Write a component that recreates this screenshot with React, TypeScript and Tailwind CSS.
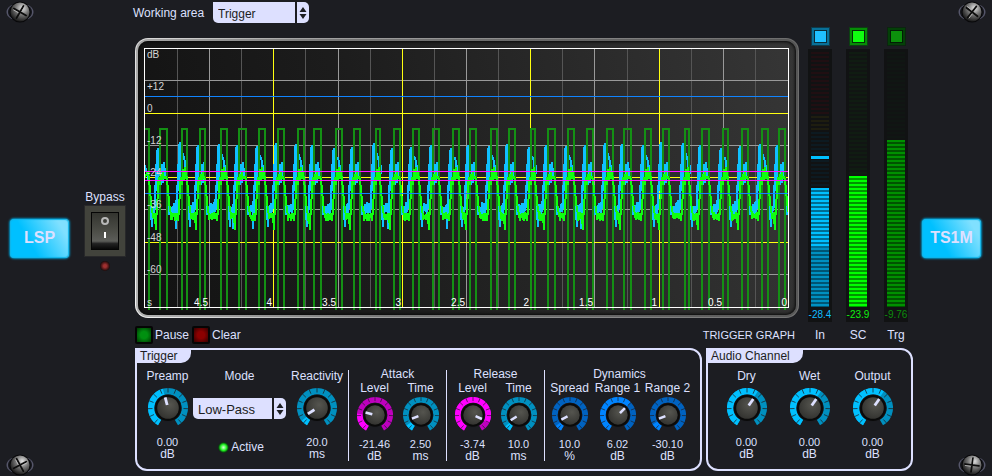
import React from "react";

const PULSES: [number, number][] = [
  [140, 149], [160, 167], [182, 187], [200, 205], [221, 227], [239, 246], [259, 265],
  [278, 284], [298, 304], [314, 321], [336, 342], [354, 360], [376, 380], [394, 400],
  [413, 419], [433, 439], [453, 459], [470, 476], [491, 497], [509, 515], [531, 535],
  [548, 555], [568, 574], [587, 593], [607, 613], [624, 631], [645, 651], [663, 669],
  [685, 689], [702, 709], [723, 728], [742, 748], [762, 768], [779, 785], [801, 807],
];

const noise = (n: number) => {
  const v = Math.sin(n * 12.9898) * 43758.5453;
  return v - Math.floor(v);
};

const toPoints = (pts: [number, number][]) => pts.map((p) => p.join(",")).join(" ");

function buildGate() {
  const pts: [number, number][] = [];
  PULSES.forEach(([s, e]) => {
    pts.push([s, 320], [s, 129], [e, 129], [e, 320]);
  });
  return toPoints(pts);
}

function buildInput() {
  const pts: [number, number][] = [];
  PULSES.forEach(([s, e], i) => {
    const wide = i % 2 === 0;
    const peak = 143 + Math.round(noise(i) * 6);
    pts.push([s - 5, 206], [s - 4, 165], [s - 4, 190], [s - 3, peak + 3], [s - 2, peak], [s - 2, 188], [s - 1, peak + 4]);
    if (wide) {
      pts.push([s, peak + 8], [s + 2, 158], [s + 3, 162], [s + 4, 172], [s + 5, 166], [e, 182]);
    } else {
      pts.push([s, 168], [s + 1, 184], [s + 2, 165], [s + 3, 182], [s + 4, 163], [s + 5, 178], [e, 165], [e, 182]);
    }
    const next = PULSES[i + 1] ? PULSES[i + 1][0] : e + 18;
    pts.push([e + 1, 196], [e + 2, 214], [e + 3, wide ? 226 : 212]);
    for (let x = e + 4; x < next - 5; x++) {
      const rise = Math.min(6, x - e - 4);
      pts.push([x, 205 - rise + Math.round(noise(x) * 5)], [x, 210 + Math.round(noise(x + 7) * 4)]);
    }
    if (noise(i + 40) > 0.6) pts.push([next - 6, 228]);
  });
  return toPoints(pts);
}

function buildSidechain() {
  const pts: [number, number][] = [];
  PULSES.forEach(([s, e], i) => {
    const wide = i % 2 === 0;
    const top = wide ? 168 : 173;
    pts.push([s - 3, 214], [s - 2, 184], [s - 1, 178], [s, 184], [s + 1, top + 2], [s + 2, 180], [s + 3, top], [s + 4, 178], [e - 1, top + 4], [e, 180], [e + 1, 190], [e + 2, 202], [e + 3, 210]);
    const next = PULSES[i + 1] ? PULSES[i + 1][0] : e + 18;
    for (let x = e + 4; x < next - 4; x++) {
      pts.push([x, 213 + Math.round(noise(x + 3) * 3)], [x, 216 + Math.round(noise(x + 11) * 4)]);
    }
    pts.push([next - 4, wide ? 229 : 220], [next - 4, 214]);
  });
  return toPoints(pts);
}

const GATE = buildGate();
const INPUT = buildInput();
const SIDECHAIN = buildSidechain();

const MINOR_X = [177, 241, 305, 370, 434, 498, 562, 627, 691, 755];
const MAJOR_X = [209, 338, 466, 594, 723];
const MARK_X = [273, 402, 530, 659];
const LEVELS: [string, number][] = [["dB", 58], ["+12", 90], ["0", 112], ["-12", 144], ["-24", 176], ["-36", 208], ["-48", 241], ["-60", 273], ["s", 306]];
const TIMES: [string, number][] = [["4.5", 208], ["4", 272], ["3.5", 336], ["3", 401], ["2.5", 465], ["2", 529], ["1.5", 593], ["1", 657], ["0.5", 722], ["0", 787]];

function Graph() {
  return (
    <div className="rounded-[13px] bg-[linear-gradient(78deg,#f4f4f4_0%,#a5a5a5_30%,#6c6c6c_100%)] p-px">
      <div className="rounded-[12px] bg-[linear-gradient(80deg,#b4b4b4_0%,#777_35%,#555_100%)] p-[2px]">
        <div className="rounded-[10px] bg-[linear-gradient(76deg,#121212_0%,#1c1c1c_35%,#363636_100%)] pt-[7px] pr-[7px] pb-[5px] pl-[6px] shadow-[inset_0_0_3px_1px_#0a0a0a]">
          <svg viewBox="144 48 645 262" className="block h-auto w-full" fontFamily="'Liberation Sans', Arial, sans-serif" fontSize="10" role="img" aria-label="Trigger graph">
            <g shapeRendering="crispEdges">
              {MINOR_X.map((x) => <rect key={x} x={x} y="48" width="1" height="260" fill="#555" />)}
              {MAJOR_X.map((x) => <rect key={x} x={x} y="48" width="1" height="260" fill="#999" />)}
              {[80, 145, 209, 274].map((y) => <rect key={y} x="144" y={y} width="645" height="1" fill="#999" />)}
              {MARK_X.map((x) => <rect key={x} x={x} y="48" width="1" height="260" fill="#ffff10" />)}
              {[113, 177, 242].map((y) => <rect key={y} x="144" y={y} width="645" height="1" fill="#ffff10" />)}
              <g fill="none" strokeLinejoin="round">
                <polyline points={INPUT} stroke="#10c0ff" strokeWidth="2" />
                <polyline points={GATE} stroke="#149014" strokeWidth="2" />
                <polyline points={SIDECHAIN} stroke="#10ff10" strokeWidth="2" />
              </g>
              {[96, 193].map((y) => <rect key={y} x="144" y={y} width="645" height="1" fill="#1084ff" />)}
              {[171, 180].map((y) => <rect key={y} x="144" y={y} width="645" height="1" fill="#ff10ff" />)}
              <rect x="144.5" y="48.5" width="644" height="259" fill="none" stroke="#fff" />
            </g>
            <g fill="#d4d4d4">
              {LEVELS.map(([t, y]) => <text key={t} x="147" y={y}>{t}</text>)}
            </g>
            <g fill="#fff" textAnchor="end">
              {TIMES.map(([t, x]) => <text key={t} x={x} y="306">{t}</text>)}
            </g>
          </svg>
        </div>
      </div>
    </div>
  );
}

function Screw({ turn }: { turn: number }) {
  return (
    <svg width="28" height="23" viewBox="0 0 28 23" aria-hidden="true">
      <defs>
        <radialGradient id={`screw${turn}`} cx="0.62" cy="0.3" r="0.75">
          <stop offset="0" stopColor="#e4e4e4" />
          <stop offset="0.45" stopColor="#777" />
          <stop offset="1" stopColor="#111" />
        </radialGradient>
      </defs>
      <ellipse cx="14" cy="12" rx="13.5" ry="9" fill="#55566a" />
      <ellipse cx="14" cy="12" rx="12" ry="8.5" fill="#15161b" />
      <circle cx="14" cy="12" r="10.5" fill="#08080a" />
      <circle cx="14" cy="12" r="9.5" fill={`url(#screw${turn})`} />
      <g transform={`rotate(${turn} 14 12)`} strokeLinecap="round">
        <path d="M14 5V19M7 12H21" stroke="#0c0c0c" strokeWidth="1.800" />
        <path d="M15.400 5V10.500M7.500 13.400H12.500" stroke="#bbb" strokeWidth="0.800" />
      </g>
    </svg>
  );
}

const polar = (r: number, a: number): [number, number] => {
  const t = (a * Math.PI) / 180;
  return [20 + r * Math.sin(t), 20 - r * Math.cos(t)];
};

const arc = (r: number, a: number, b: number) => {
  const [x1, y1] = polar(r, a);
  const [x2, y2] = polar(r, b);
  return `M${x1} ${y1}A${r} ${r} 0 ${b - a > 180 ? 1 : 0} 1 ${x2} ${y2}`;
};

const TONES = {
  cyan: { on: "#00c0ff", off: "#0090c0" },
  blue: { on: "#0084ff", off: "#0062c0" },
  magenta: { on: "#ff00ff", off: "#bf00bf" },
};

type KnobProps = { label: string; value: string; unit: string; angle: number; lit: number; tone?: keyof typeof TONES; small?: boolean; width: string };

function Knob({ label, value, unit, angle, lit, tone = "cyan", small, width }: KnobProps) {
  const c = TONES[tone];
  const [px, py] = polar(4.500, angle);
  const [qx, qy] = polar(9.500, angle);
  const ticks = Array.from({ length: 13 }, (_, i) => -138 + i * 23);
  return (
    <div className={`flex shrink-0 flex-col items-center text-[12px] leading-[12px] whitespace-nowrap ${width}`}>
      <span>{label}</span>
      <svg viewBox="0 0 40 40" className={small ? "mt-[3px] mb-[5px] size-9" : "mt-[6px] mb-2 size-10"} role="slider" aria-label={label} aria-valuetext={`${value} ${unit}`} aria-valuenow={angle}>
        <defs>
          <radialGradient id={`cap-${tone}`} cx="0.6" cy="0.35" r="0.7">
            <stop offset="0" stopColor="#55554f" />
            <stop offset="1" stopColor="#32322f" />
          </radialGradient>
        </defs>
        <path d={arc(16.800, -150, 150)} fill="none" stroke={c.off} strokeWidth="6.400" />
        <path d={arc(16.800, -150, lit)} fill="none" stroke={c.on} strokeWidth="6.400" />
        {ticks.map((a) => {
          const [x1, y1] = polar(15.500, a);
          const [x2, y2] = polar(20.500, a);
          return <line key={a} x1={x1} y1={y1} x2={x2} y2={y2} stroke="#1c1d22" strokeOpacity="0.750" strokeWidth="1" />;
        })}
        <circle cx="20" cy="20" r="13.600" fill="#1c1d22" />
        <circle cx="20" cy="20" r="13" fill="#0a0a0a" />
        <circle cx="20" cy="20" r="10.800" fill={`url(#cap-${tone})`} />
        <line x1={px} y1={py} x2={qx} y2={qy} stroke="#dde0ff" strokeWidth="2.800" strokeLinecap="square" />
      </svg>
      <span className="text-[11px]">{value}</span>
      <span>{unit}</span>
    </div>
  );
}

function KnobGroup({ title, className, children }: { title: string; className: string; children: React.ReactNode }) {
  return (
    <div className={`flex h-[91px] flex-col items-center border-l border-[#dde0ff] ${className}`}>
      <div className="-mt-[2px] text-[12px] leading-[12px]">{title}</div>
      <div className="mt-[2px] flex">{children}</div>
    </div>
  );
}

function Combo({ id, options, className }: { id: string; options: string[]; className: string }) {
  return (
    <div className={`relative h-[21px] shrink-0 text-[#1c1d22] ${className}`}>
      <select id={id} className="block h-full w-full appearance-none rounded-[5px] rounded-tl-none bg-[#dde0ff] pt-[3px] pl-[5px] leading-[18px] outline-none">
        {options.map((o) => <option key={o}>{o}</option>)}
      </select>
      <span className="pointer-events-none absolute inset-y-0 right-0 flex w-[14px] items-center justify-center border-l-2 border-[#1c1d22]">
        <svg width="8" height="12" viewBox="0 0 8 12" aria-hidden="true">
          <path d="M4 0L7.500 5H0.500ZM4 12L7.500 7H0.500Z" fill="#1c1d22" />
        </svg>
      </span>
    </div>
  );
}

function Panel({ title, className, children }: { title: string; className: string; children: React.ReactNode }) {
  return (
    <section className={`rounded-[12px] rounded-tl-none border-2 border-[#dde0ff] ${className}`}>
      <h2 className="-mt-px h-[14px] w-fit rounded-br-[10px] bg-[#dde0ff] pr-[13px] pl-[3px] text-[12px] leading-[14px] text-[#1c1d22]">{title}</h2>
      <div className="mt-[7px] h-[99px]">{children}</div>
    </section>
  );
}

function Badge({ children }: { children: React.ReactNode }) {
  return (
    <button type="button" className="h-[39px] w-[59px] shrink-0 rounded-[4px] bg-[linear-gradient(60deg,#00c0ff_35%,#80e0ff_85%)] text-[16px] leading-none font-bold text-[#dde0ff] shadow-[0_0_2px_1px_#0090c0,inset_0_0_1px_1px_#10b4e8]">
      {children}
    </button>
  );
}

function Led({ tint }: { tint: string }) {
  return <span className={`block size-[18px] rounded-[2px] border-2 border-[#050505] ${tint}`} />;
}

type MeterProps = { name: string; value: string; level: number; led: string; bar: string; idle: string; text: string; tail?: string; peak?: boolean };

function Meter({ name, value, level, led, bar, idle, text, tail, peak }: MeterProps) {
  return (
    <div className="flex w-6 flex-col items-center">
      <button type="button" aria-label={`Show ${name}`} className={`flex size-[19px] items-center justify-center border p-[2px] ${led}`}>
        <span className="size-[11px] bg-current" />
      </button>
      <div className="mt-[3px] w-full bg-[#111213] pt-[3px]">
        <div className={`relative mx-auto flex h-[255px] w-[18px] flex-col justify-end ${idle}`}>
          {peak && <span className="absolute inset-x-0 top-[104px] h-[3px] bg-[#00c0ff]" />}
          <div className={`flex flex-col justify-end ${bar}`} style={{ height: level }}>
            {tail && <div className={`h-[59px] ${tail}`} />}
          </div>
        </div>
        <div className={`flex h-[15px] justify-center text-[10px] leading-[15px] ${text}`}>{value}</div>
      </div>
      <div className="mt-[7px] text-[12px] leading-[12px]">{name}</div>
    </div>
  );
}

export default function App() {
  return (
    <div className="flex w-full bg-[#1c1d22] font-['Liberation_Sans',Arial,sans-serif] text-[#dde0ff]">
      <aside className="flex w-[135px] shrink-0 flex-col justify-between pl-[6px]">
        <Screw turn={30} />
        <div className="flex items-center pl-1">
          <Badge>LSP</Badge>
          <div className="ml-[15px] flex w-[42px] flex-col items-center pb-[14px]">
            <label htmlFor="bypass" className="mb-[2px] text-[12px] leading-[12px]">Bypass</label>
            <button id="bypass" type="button" className="flex h-[52px] w-[42px] items-center justify-center border border-[#28282a] bg-[#42433c]">
              <span className="flex h-[38px] w-7 flex-col items-center border border-[#050505] bg-[linear-gradient(#33342f_0%,#4c4d47_50%,#5c5d59_78%,#222_85%,#080808_100%)] pt-1">
                <span className="size-2 rounded-full border-2 border-[#b8b8b8]" />
                <span className="mt-[7px] h-[6px] w-[2px] bg-white" />
              </span>
            </button>
            <span className="mt-[4px] size-[10px] rounded-full bg-[radial-gradient(#a03030_20%,#501818_50%,#0c0808_75%)]" />
          </div>
        </div>
        <Screw turn={62} />
      </aside>

      <main className="min-w-0 flex-1 pb-[5px]">
        <div className="flex pr-[5px]">
          <div className="min-w-0 flex-1">
            <div className="-ml-[2px] flex h-[38px] items-start pt-[2px] text-[12px]">
              <label htmlFor="area" className="mr-2 w-[72px] leading-[22px] whitespace-nowrap">Working area</label>
              <Combo id="area" options={["Trigger", "Sidechain", "Samples"]} className="w-24" />
            </div>
            <Graph />
            <div className="mt-2 flex h-[18px] items-center text-[12px] leading-[12px]">
              <button type="button" className="flex items-center gap-[2px]">
                <Led tint="bg-[radial-gradient(#009010_35%,#004404_90%)]" />Pause
              </button>
              <button type="button" className="ml-[3px] flex items-center gap-[2px]">
                <Led tint="bg-[radial-gradient(#8c0000_35%,#400000_90%)]" />Clear
              </button>
              <span className="mr-1 ml-auto text-[11px]">TRIGGER GRAPH</span>
            </div>
          </div>
          <div className="ml-[9px] flex shrink-0 gap-[14px] pt-[27px]">
            <Meter name="In" value="-28.4" level={119} peak
              led="border-[#0c3b4c] bg-[#0a2c38] text-[#20c0ff] shadow-[inset_0_0_0_2px_#087098]"
              idle="bg-[repeating-linear-gradient(transparent_0_2px,#111213_2px_4px),linear-gradient(#200f12_0_64px,#1e1d10_64px_80px,#0d1a21_80px)]"
              bar="bg-[repeating-linear-gradient(#00c0ff_0_2px,#006c92_2px_4px)]"
              tail="bg-[repeating-linear-gradient(#0090c0_0_2px,#005472_2px_4px)]"
              text="text-[#10bcff]" />
            <Meter name="SC" value="-23.9" level={131}
              led="border-[#0c4012] bg-[#062c08] text-[#10ff10] shadow-[inset_0_0_0_2px_#068c06]"
              idle="bg-[repeating-linear-gradient(#101c12_0_2px,#111513_2px_4px)]"
              bar="bg-[repeating-linear-gradient(#00ff00_0_2px,#009400_2px_4px)]"
              text="text-[#10f010]" />
            <Meter name="Trg" value="-9.76" level={167}
              led="border-[#0c2410] bg-[#031c05] text-[#0c900c] shadow-[inset_0_0_0_2px_#044008]"
              idle="bg-[repeating-linear-gradient(#101613_0_2px,#111313_2px_4px)]"
              bar="bg-[repeating-linear-gradient(#009000_0_2px,#005400_2px_4px)]"
              text="text-[#0c8c0c]" />
          </div>
        </div>

        <div className="mt-1 flex gap-1">
          <Panel title="Trigger" className="min-w-0 flex-1">
            <div className="flex">
              <div className="flex gap-[5px] pl-[10px]">
                <Knob label="Preamp" value="0.00" unit="dB" angle={-15} lit={-15} width="w-[41px]" />
                <div className="flex w-[93px] flex-col items-center text-[12px] leading-[12px]">
                  <label htmlFor="mode">Mode</label>
                  <Combo id="mode" options={["Low-Pass", "High-Pass"]} className="mt-4 w-full text-[13px]" />
                  <div className="mt-[22px] flex items-center gap-[2px] pl-[3px]">
                    <span className="size-[11px] rounded-full bg-[radial-gradient(#c8ffc8_5%,#20f020_40%,#0a4c10_62%,#122016_75%)]" />
                    <span>Active</span>
                  </div>
                </div>
                <Knob label="Reactivity" value="20.0" unit="ms" angle={-123} lit={-130} width="w-[52px]" />
              </div>
              <KnobGroup title="Attack" className="ml-[5px] w-[98px]">
                <Knob small label="Level" value="-21.46" unit="dB" angle={-75} lit={-86} tone="magenta" width="w-[46px]" />
                <Knob small label="Time" value="2.50" unit="ms" angle={-112} lit={-126} width="w-[46px]" />
              </KnobGroup>
              <KnobGroup title="Release" className="w-[98px]">
                <Knob small label="Level" value="-3.74" unit="dB" angle={114} lit={117} tone="magenta" width="w-[46px]" />
                <Knob small label="Time" value="10.0" unit="ms" angle={-122} lit={-130} width="w-[46px]" />
              </KnobGroup>
              <KnobGroup title="Dynamics" className="w-[150px]">
                <Knob small label="Spread" value="10.0" unit="%" angle={-118} lit={-128} tone="blue" width="w-12" />
                <Knob small label="Range 1" value="6.02" unit="dB" angle={45} lit={45} tone="blue" width="w-12" />
                <Knob small label="Range 2" value="-30.10" unit="dB" angle={-112} lit={-122} tone="blue" width="w-[52px]" />
              </KnobGroup>
            </div>
          </Panel>
          <Panel title="Audio Channel" className="w-[207px] shrink-0">
            <div className="flex pl-[7px]">
              <Knob label="Dry" value="0.00" unit="dB" angle={35} lit={33} width="w-[63px]" />
              <Knob label="Wet" value="0.00" unit="dB" angle={35} lit={33} width="w-[63px]" />
              <Knob label="Output" value="0.00" unit="dB" angle={35} lit={33} width="w-[63px]" />
            </div>
          </Panel>
        </div>
      </main>

      <aside className="flex w-[79px] shrink-0 flex-col items-end justify-between pr-[6px]">
        <Screw turn={-52} />
        <div className="pr-[5px]"><Badge>TS1M</Badge></div>
        <Screw turn={8} />
      </aside>
    </div>
  );
}
